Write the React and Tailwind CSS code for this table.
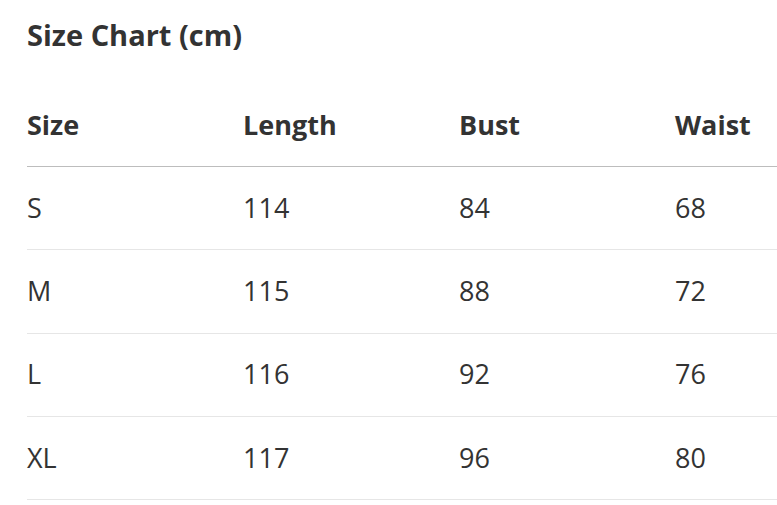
import React from 'react';

const rows = [
  ['S', '114', '84', '68'],
  ['M', '115', '88', '72'],
  ['L', '116', '92', '76'],
  ['XL', '117', '96', '80'],
];

const headers = ['Size', 'Length', 'Bust', 'Waist'];

export default function App() {
  return (
    <div
      className="w-full overflow-hidden bg-white text-[#333] pl-[27px]"
      style={{ fontFamily: '"Open Sans", "Noto Sans", sans-serif' }}
    >
      <h2 className="mt-[16px] mb-[31px] h-[37px] leading-[37px] text-[29px] font-bold">Size Chart (cm)</h2>
      <div className="w-[864px]">
        <div className="grid grid-cols-[216px_216px_216px_216px] h-[83px] items-center border-b border-[#bdbdbd]">
          {headers.map((h) => (
            <div key={h} className="text-[27px] font-bold">{h}</div>
          ))}
        </div>
        {rows.map((r) => (
          <div key={r[0]} className="grid grid-cols-[216px_216px_216px_216px] h-[83.3px] items-center border-b border-[#e6e6e6]">
            {r.map((c, i) => (
              <div key={i} className="text-[27px]">{c}</div>
            ))}
          </div>
        ))}
      </div>
    </div>
  );
}
